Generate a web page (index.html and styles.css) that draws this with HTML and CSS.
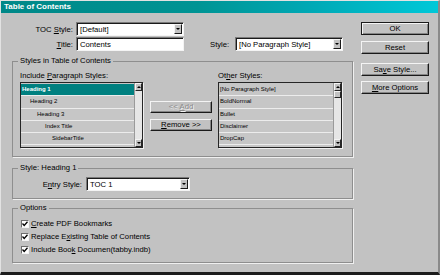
FILE: index.html
```html
<!DOCTYPE html>
<html lang="en">
<head>
  <meta charset="UTF-8" />
  <meta name="viewport" content="width=device-width, initial-scale=1.0" />
  <title>Table of Contents</title>
  <link rel="stylesheet" href="styles.css">
</head>
<body>
  <div class="window">
    <div class="titlebar">Table of Contents</div>
    <div class="content">
      <div class="main">
        <div class="field-row">
          <label class="lbl">TOC <u>S</u>tyle:</label>
          <div class="dropdown"><span>[Default]</span><i class="drop-btn"><b class="tri-down"></b></i></div>
        </div>
        <div class="field-row">
          <label class="lbl"><u>T</u>itle:</label>
          <div class="textbox">Contents</div>
          <label class="lbl-style">Style:</label>
          <div class="dropdown"><span>[No Paragraph Style]</span><i class="drop-btn"><b class="tri-down"></b></i></div>
        </div>

        <fieldset class="group group-styles">
          <legend>Styles in Table of Contents</legend>
          <div class="styles-body">
            <div class="col-list">
              <div class="col-label">Include <u>P</u>aragraph Styles:</div>
              <div class="listbox">
                <div class="list-items">
                  <div class="item selected lvl1">Heading 1</div>
                  <div class="item lvl2">Heading 2</div>
                  <div class="item lvl3">Heading 3</div>
                  <div class="item lvl4">Index Title</div>
                  <div class="item lvl5">SidebarTitle</div>
                </div>
                <div class="scroll">
                  <div class="arrow"><b class="tri-up"></b></div>
                  <div class="track"></div>
                  <div class="arrow"><b class="tri-down"></b></div>
                </div>
              </div>
            </div>
            <div class="col-buttons">
              <div class="btn btn-add disabled">&lt;&lt; <u>A</u>dd</div>
              <div class="btn btn-remove"><u>R</u>emove &gt;&gt;</div>
            </div>
            <div class="col-list col-other">
              <div class="col-label">Ot<u>h</u>er Styles:</div>
              <div class="listbox">
                <div class="list-items">
                  <div class="item lvl1">[No Paragraph Style]</div>
                  <div class="item lvl1">BoldNormal</div>
                  <div class="item lvl1">Bullet</div>
                  <div class="item lvl1">Disclaimer</div>
                  <div class="item lvl1">DropCap</div>
                </div>
                <div class="scroll">
                  <div class="arrow"><b class="tri-up"></b></div>
                  <div class="thumb"></div>
                  <div class="track"></div>
                  <div class="arrow"><b class="tri-down"></b></div>
                </div>
              </div>
            </div>
          </div>
        </fieldset>

        <fieldset class="group group-entry">
          <legend>Style: Heading 1</legend>
          <div class="entry-row">
            <label class="lbl-entry">E<u>n</u>try Style:</label>
            <div class="dropdown dropdown-entry"><span>TOC 1</span><i class="drop-btn"><b class="tri-down"></b></i></div>
          </div>
        </fieldset>

        <fieldset class="group group-options">
          <legend>Options</legend>
          <div class="options-body">
            <div class="check-row">
              <span class="checkbox"><svg width="6" height="6" viewBox="0 0 6 6"><path d="M0.5 2.5 L2.2 4.5 L5.5 0.8" fill="none" stroke="#000" stroke-width="1.3"/></svg></span>
              <span><u>C</u>reate PDF Bookmarks</span>
            </div>
            <div class="check-row">
              <span class="checkbox"><svg width="6" height="6" viewBox="0 0 6 6"><path d="M0.5 2.5 L2.2 4.5 L5.5 0.8" fill="none" stroke="#000" stroke-width="1.3"/></svg></span>
              <span>Replace E<u>x</u>isting Table of Contents</span>
            </div>
            <div class="check-row">
              <span class="checkbox"><svg width="6" height="6" viewBox="0 0 6 6"><path d="M0.5 2.5 L2.2 4.5 L5.5 0.8" fill="none" stroke="#000" stroke-width="1.3"/></svg></span>
              <span>Include Boo<u>k</u> Documen(tabby.indb)</span>
            </div>
          </div>
        </fieldset>
      </div>

      <div class="side">
        <div class="btn btn-side btn-default">OK</div>
        <div class="btn btn-side btn-reset">Reset</div>
        <div class="btn btn-side btn-save">Sa<u>v</u>e Style...</div>
        <div class="btn btn-side btn-more"><u>M</u>ore Options</div>
      </div>
    </div>
  </div>
</body>
</html>
```

FILE: styles.css
```css
* {
  box-sizing: border-box;
}
body {
  margin: 0;
  background: #c2c2c2;
  font-family: "Liberation Sans", Arial, sans-serif;
  font-size: 7.7px;
  color: #000;
}
u {
  text-decoration: underline;
  text-underline-offset: 1px;
}
.window {
  width: 440px;
  height: 275px;
  background: #c2c2c2;
  border-top: 1px solid #e2e2e2;
  border-left: 1px solid #e2e2e2;
  border-right: 2px solid #8a8a8a;
  border-bottom: 3px solid #1c1c1c;
  display: flex;
  flex-direction: column;
}
.titlebar {
  height: 12px;
  line-height: 12px;
  padding-left: 3px;
  background: linear-gradient(to right, #008888, #009494 45%, #00a8b4 70%, #00c8d8);
  color: #fff;
  font-weight: bold;
  font-size: 8px;
}
.content {
  display: flex;
  padding-top: 9px;
}
.main {
  width: 341px;
  margin-left: 11px;
}
.side {
  width: 68px;
  margin-left: 8px;
  display: flex;
  flex-direction: column;
}

/* top fields */
.field-row {
  display: flex;
  align-items: center;
  height: 14px;
}
.field-row + .field-row {
  margin-top: 1px;
}
.lbl {
  width: 61px;
  margin-right: 3px;
  text-align: right;
}
.lbl-style {
  width: 23px;
  margin-left: 26px;
  margin-right: 2px;
}
.dropdown, .textbox {
  width: 108px;
  height: 14px;
  background: #fff;
  border: 1px solid;
  border-color: #7a7a7a #f4f4f4 #f4f4f4 #7a7a7a;
  box-shadow: inset 1px 1px 0 #1a1a1a;
  display: flex;
  align-items: center;
  padding-left: 3px;
  white-space: nowrap;
}
.drop-btn {
  margin-left: auto;
  margin-right: 1px;
  width: 8px;
  height: 10px;
  background: #c2c2c2;
  border: 1px solid;
  border-color: #f4f4f4 #1a1a1a #1a1a1a #f4f4f4;
  display: flex;
  align-items: center;
  justify-content: center;
}
.tri-down, .tri-up {
  display: block;
  width: 0;
  height: 0;
  border-left: 2px solid transparent;
  border-right: 2px solid transparent;
}
.tri-down {
  border-top: 2px solid #000;
}
.tri-up {
  border-bottom: 2px solid #000;
}

/* group boxes */
.group {
  margin: 5px 0 0;
  padding: 0;
  border: 1px solid #8e8e8e;
  box-shadow: 1px 1px 0 #f0f0f0;
}
.group legend {
  margin-left: 5px;
  padding: 0 2px;
  line-height: 10px;
  height: 10px;
  background: #c2c2c2;
}
.group-entry {
  margin-top: 6px;
}
.group-options {
  margin-top: 4px;
}

.styles-body {
  display: flex;
  padding: 5px 10px 8px 7px;
}
.col-list {
  width: 123px;
}
.col-other {
  width: 124px;
  margin-left: 6px;
}
.col-label {
  height: 10px;
  line-height: 10px;
  margin-bottom: 1px;
  white-space: nowrap;
}
.col-buttons {
  width: 62px;
  margin-left: 7px;
  padding-top: 30px;
  display: flex;
  flex-direction: column;
  gap: 6px;
}
.listbox {
  height: 66px;
  display: flex;
  border: 1px solid #262626;
  box-shadow: 1px 1px 0 #f0f0f0;
  background: #c6c6c6;
  overflow: hidden;
}
.list-items {
  flex: 1;
  padding-top: 1px;
}
.item {
  height: 12.3px;
  line-height: 11px;
  font-size: 6px;
  border-bottom: 1px solid #ececec;
  white-space: nowrap;
}
.item.selected {
  background: #008080;
  color: #fff;
  font-weight: bold;
}
.lvl1 { padding-left: 1px; }
.lvl2 { padding-left: 9px; }
.lvl3 { padding-left: 16px; }
.lvl4 { padding-left: 24px; }
.lvl5 { padding-left: 31px; }

.scroll {
  width: 8px;
  display: flex;
  flex-direction: column;
  background: #e6e6e6;
  border-left: 1px solid #9a9a9a;
}
.arrow, .thumb {
  height: 8px;
  background: #c2c2c2;
  border: 1px solid;
  border-color: #f4f4f4 #262626 #262626 #f4f4f4;
  display: flex;
  align-items: center;
  justify-content: center;
}
.thumb {
  height: 7px;
}
.track {
  flex: 1;
}

/* buttons */
.btn {
  height: 12px;
  line-height: 10px;
  text-align: center;
  background: #c2c2c2;
  border: 1px solid;
  border-color: #f4f4f4 #1a1a1a #1a1a1a #f4f4f4;
  box-shadow: inset -1px -1px 0 #858585;
  white-space: nowrap;
}
.btn.disabled {
  color: #8a8a8a;
  text-shadow: 1px 1px 0 #f4f4f4;
}
.btn-side {
  height: 13px;
  line-height: 11px;
}
.btn-default {
  border-color: #1a1a1a;
  box-shadow: inset 1px 1px 0 #f4f4f4, inset -1px -1px 0 #858585;
}
.btn-reset {
  margin-top: 6px;
}
.btn-save {
  margin-top: 9px;
}
.btn-more {
  margin-top: 5px;
}

/* entry style */
.entry-row {
  display: flex;
  align-items: center;
  padding: 4px 0 7px;
}
.lbl-entry {
  width: 69px;
  margin-right: 4px;
  text-align: right;
}
.dropdown-entry {
  width: 104px;
}

/* options */
.options-body {
  padding: 4px 0 6px 8px;
}
.check-row {
  height: 13px;
  display: flex;
  align-items: center;
  white-space: nowrap;
}
.checkbox {
  width: 8px;
  height: 8px;
  margin-right: 2px;
  background: #fff;
  border: 1px solid;
  border-color: #6e6e6e #f4f4f4 #f4f4f4 #6e6e6e;
  display: flex;
  align-items: center;
  justify-content: center;
}
```
